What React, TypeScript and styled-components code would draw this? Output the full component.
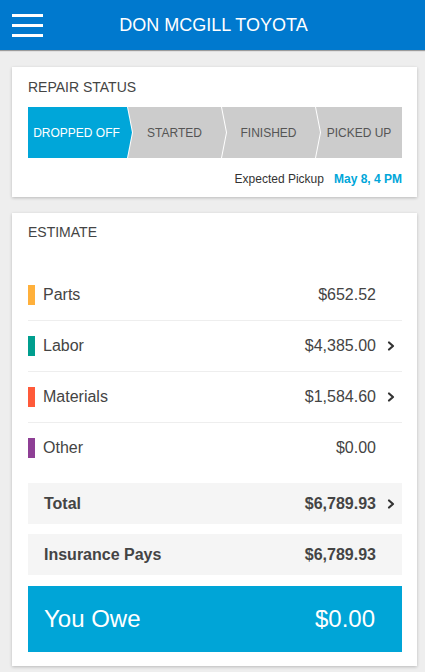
import React from "react";
import styled, { createGlobalStyle } from "styled-components";

const Global = createGlobalStyle`
  html, body { margin: 0; padding: 0; background: #eeeeee; }
  body { font-family: "Liberation Sans", Arial, sans-serif; }
  * { box-sizing: border-box; }
`;

const Page = styled.div`
  width: 425px;
  min-height: 672px;
  background: #eeeeee;
  padding-bottom: 6px;
`;

const Header = styled.header`
  height: 50px;
  background: #0079ce;
  display: grid;
  grid-template-columns: 1fr auto 1fr;
  align-items: center;
  padding: 0 12px;
  box-shadow: 0 1px 1px rgba(0, 0, 0, 0.35);
  position: relative;
  z-index: 1;
`;

const Burger = styled.div`
  display: flex;
  flex-direction: column;
  gap: 7px;
  width: 31px;
  padding-top: 1px;
`;

const BurgerBar = styled.span`
  display: block;
  height: 3px;
  background: #ffffff;
`;

const Title = styled.h1`
  margin: 0;
  color: #ffffff;
  font-size: 18px;
  font-weight: 400;
  line-height: 20px;
  padding-left: 2px;
`;

const Card = styled.section`
  background: #ffffff;
  margin: 0 8px 0 12px;
  box-shadow: 0 1px 3px rgba(0, 0, 0, 0.22);
  padding: 12px 15px 11px 16px;
  & + & { margin-top: 16px; }
  &:first-of-type { margin-top: 17px; }
`;

const CardTitle = styled.h2`
  margin: 0;
  font-size: 14px;
  font-weight: 400;
  line-height: 16px;
  color: #444444;
  text-transform: uppercase;
`;

const Steps = styled.div`
  display: flex;
  height: 51px;
  margin-top: 12px;
`;

const Step = styled.div<{ $basis: number; $active?: boolean; $first?: boolean; $last?: boolean }>`
  flex: ${(p) => (p.$last ? "1 1 auto" : `0 0 ${p.$basis}px`)};
  margin-left: ${(p) => (p.$first ? "0" : "-4px")};
  background: ${(p) => (p.$active ? "#00a6d9" : "#cccccc")};
  color: ${(p) => (p.$active ? "#ffffff" : "#555555")};
  font-size: 12px;
  display: flex;
  align-items: center;
  justify-content: center;
  padding-right: ${(p) => (p.$last ? "0" : p.$first ? "7px" : "5px")};
  white-space: nowrap;
  clip-path: ${(p) => {
    const left = p.$first ? "0 100%, 0 0" : "0 100%, 5px 50%, 0 0";
    const right = p.$last
      ? "100% 0, 100% 100%"
      : "calc(100% - 5px) 0, 100% 50%, calc(100% - 5px) 100%";
    return `polygon(${left}, ${right})`;
  }};
`;

const Pickup = styled.div`
  display: flex;
  justify-content: flex-end;
  align-items: center;
  gap: 10px;
  margin-top: 14px;
  font-size: 12px;
  line-height: 14px;
  color: #333333;
`;

const PickupTime = styled.span`
  color: #00a6d9;
  font-weight: 700;
`;

const EstimateCard = styled(Card)`
  padding: 11px 15px 14px 16px;
`;

const List = styled.div`
  margin-top: 30px;
  display: flex;
  flex-direction: column;
`;

const Row = styled.div`
  height: 51px;
  display: flex;
  align-items: center;
  border-bottom: 1px solid #eeeeee;
  &:last-child { border-bottom: none; height: 50px; }
`;

const Swatch = styled.span<{ $color: string }>`
  width: 7px;
  height: 20px;
  background: ${(p) => p.$color};
  margin-right: 8px;
  flex: 0 0 auto;
`;

const Label = styled.span`
  flex: 1;
  font-size: 16px;
  color: #444444;
`;

const Amount = styled.span`
  font-size: 16px;
  color: #444444;
`;

const ChevronCell = styled.span`
  width: 26px;
  display: flex;
  align-items: center;
  padding-left: 11px;
  color: #333333;
`;

const SummaryRow = styled.div<{ $gapTop: number }>`
  height: 41px;
  margin-top: ${(p) => p.$gapTop}px;
  background: #f5f5f5;
  display: flex;
  align-items: center;
  padding-left: 16px;
  font-size: 16px;
  font-weight: 700;
  color: #444444;
`;

const SummaryLabel = styled.span`
  flex: 1;
`;

const OweBox = styled.div`
  height: 66px;
  margin-top: 11px;
  background: #00a5d7;
  color: #ffffff;
  display: flex;
  align-items: center;
  justify-content: space-between;
  padding: 0 27px 0 16px;
  font-size: 24px;
`;

const Chevron = () => (
  <svg width="8" height="12" viewBox="0 0 8 12" aria-hidden="true">
    <polyline points="2,2.5 6,6 2,9.5" fill="none" stroke="currentColor" strokeWidth="2.2" strokeLinecap="round" strokeLinejoin="round" />
  </svg>
);

const steps = [
  { label: "DROPPED OFF", basis: 104 },
  { label: "STARTED", basis: 98 },
  { label: "FINISHED", basis: 98 },
  { label: "PICKED UP", basis: 86 },
];

const items = [
  { label: "Parts", amount: "$652.52", color: "#ffb03b", more: false },
  { label: "Labor", amount: "$4,385.00", color: "#009e8e", more: true },
  { label: "Materials", amount: "$1,584.60", color: "#ff5a3a", more: true },
  { label: "Other", amount: "$0.00", color: "#8e3f95", more: false },
];

export default function App() {
  return (
    <Page>
      <Global />
      <Header>
        <Burger>
          <BurgerBar />
          <BurgerBar />
          <BurgerBar />
        </Burger>
        <Title>DON MCGILL TOYOTA</Title>
        <span />
      </Header>

      <Card>
        <CardTitle>Repair Status</CardTitle>
        <Steps>
          {steps.map((s, i) => (
            <Step
              key={s.label}
              $basis={s.basis}
              $active={i === 0}
              $first={i === 0}
              $last={i === steps.length - 1}
            >
              {s.label}
            </Step>
          ))}
        </Steps>
        <Pickup>
          <span>Expected Pickup</span>
          <PickupTime>May 8, 4 PM</PickupTime>
        </Pickup>
      </Card>

      <EstimateCard>
        <CardTitle>Estimate</CardTitle>
        <List>
          {items.map((it) => (
            <Row key={it.label}>
              <Swatch $color={it.color} />
              <Label>{it.label}</Label>
              <Amount>{it.amount}</Amount>
              <ChevronCell>{it.more ? <Chevron /> : null}</ChevronCell>
            </Row>
          ))}
        </List>
        <SummaryRow $gapTop={10}>
          <SummaryLabel>Total</SummaryLabel>
          <span>$6,789.93</span>
          <ChevronCell>
            <Chevron />
          </ChevronCell>
        </SummaryRow>
        <SummaryRow $gapTop={10}>
          <SummaryLabel>Insurance Pays</SummaryLabel>
          <span>$6,789.93</span>
          <ChevronCell />
        </SummaryRow>
        <OweBox>
          <span>You Owe</span>
          <span>$0.00</span>
        </OweBox>
      </EstimateCard>
    </Page>
  );
}
